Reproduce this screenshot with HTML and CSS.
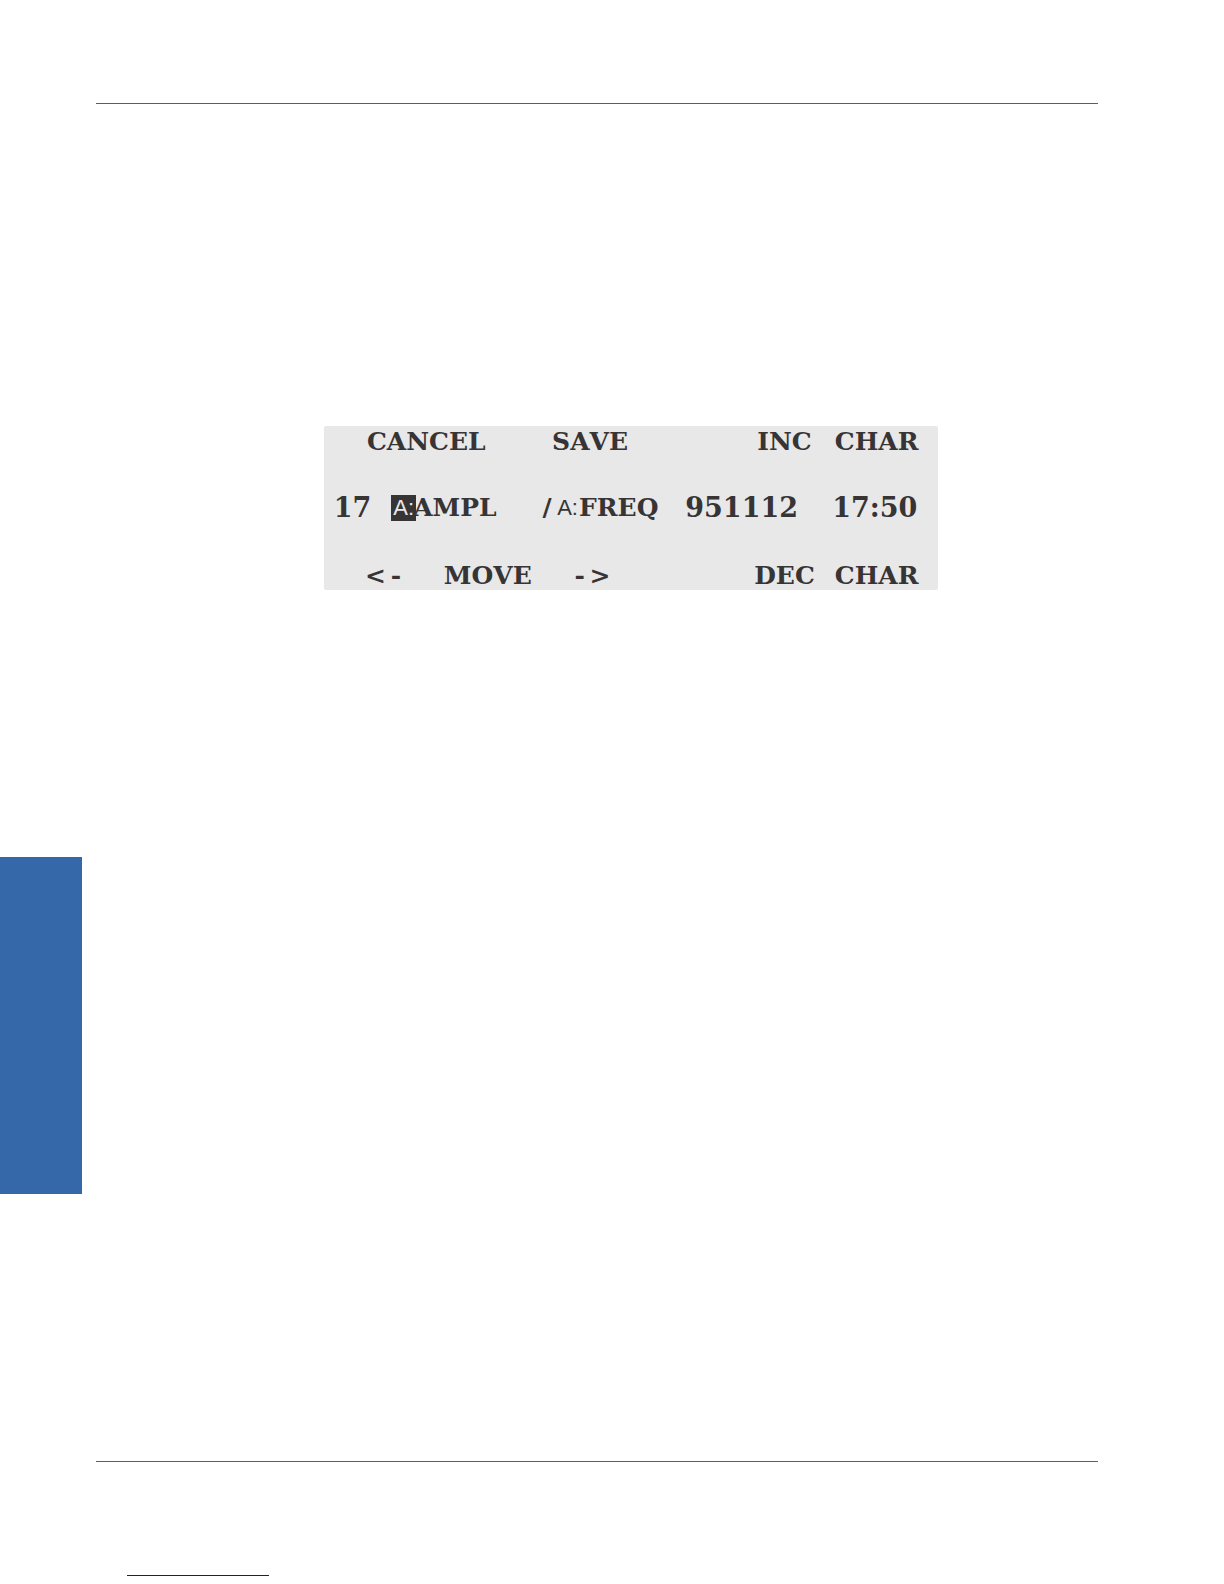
FILE: index.html
```html
<!DOCTYPE html>
<html lang="en">
<head>
<meta charset="utf-8">
<meta name="viewport" content="width=device-width, initial-scale=1">
<title>Save menu</title>
<link rel="stylesheet" href="styles.css">
</head>
<body>
<div class="page">
  <aside class="thumb"></aside>
  <main class="sheet">
    <section class="content">
      <div class="lcd">
        <div class="row">
          <span class="c3 w6">CANCEL</span>
          <span class="c12 w4">SAVE</span>
          <span class="c22 w3">INC</span>
          <span class="c26 w4">CHAR</span>
        </div>
        <div class="row entry">
          <span class="c1 w2 digits">17</span>
          <span class="c4 w1 small cursor">A:</span>
          <span class="c5 w4">AMPL</span>
          <span class="c11 w1">/</span>
          <span class="c12 w1 small">A:</span>
          <span class="c13 w4">FREQ</span>
          <span class="c18 w6 digits">951112</span>
          <span class="c25 w5 digits">17:50</span>
        </div>
        <div class="row">
          <span class="c3 w2 arrow"><b>&lt;</b><b>-</b></span>
          <span class="c7 w4">MOVE</span>
          <span class="c13 w2 arrow"><b>-</b><b>&gt;</b></span>
          <span class="c22 w3">DEC</span>
          <span class="c26 w4">CHAR</span>
        </div>
      </div>
    </section>
    <footer class="footer"><div class="underline"></div></footer>
  </main>
</div>
</body>
</html>
```
FILE: styles.css
```css
* { box-sizing: border-box; }
body { margin: 0; background: #fff; }
.page {
  display: grid;
  grid-template-columns: 82px 1fr;
  min-height: 100vh;
}
.thumb {
  height: 337px;
  margin-top: 857px;
  background: #3468a8;
}
.sheet {
  display: flex;
  flex-direction: column;
  padding: 103px 126px 0 14px;
}
.content {
  flex: 1;
  padding: 322px 160px 0 228px;
  border-top: 1px solid #2e68a4;
  border-bottom: 1px solid #2e68a4;
}
.lcd {
  padding: 4px 0 2px;
  border-radius: 2px;
  background: #e8e8e8;
  color: #373435;
  font: bold 25px/24px "DejaVu Serif", serif;
  font-kerning: none;
}
.row {
  display: grid;
  grid-template-columns: repeat(30, 1fr);
  align-items: center;
  height: 24px;
}
.entry {
  grid-template-columns: repeat(29, 1fr);
  margin: 41px 0 45px;
  padding: 0 12px 0 8px;
}
.row > span {
  grid-row: 1;
  display: flex;
  justify-content: center;
  white-space: nowrap;
  min-width: 0;
}
.c1 { grid-column-start: 1; }
.c3 { grid-column-start: 3; }
.c4 { grid-column-start: 4; }
.c5 { grid-column-start: 5; }
.c7 { grid-column-start: 7; }
.c11 { grid-column-start: 11; }
.c12 { grid-column-start: 12; }
.c13 { grid-column-start: 13; }
.c18 { grid-column-start: 18; }
.c22 { grid-column-start: 22; }
.c25 { grid-column-start: 25; }
.c26 { grid-column-start: 26; }
.w1 { grid-column-end: span 1; }
.w2 { grid-column-end: span 2; }
.w3 { grid-column-end: span 3; }
.w4 { grid-column-end: span 4; }
.w5 { grid-column-end: span 5; }
.w6 { grid-column-end: span 6; }
.row > .digits { font-size: 27px; }
.row > .small { font: 22px/26px "Liberation Sans Narrow", "Liberation Sans", sans-serif; }
.row > .cursor {
  background: #373435;
  color: #e8e8e8;
  margin: 0 -2px;
}
.arrow b { flex: 1; text-align: center; }
.footer {
  height: 122px;
  padding: 113px 0 0 31px;
}
.underline {
  width: 142px;
  height: 1px;
  background: #1414a0;
}
```
